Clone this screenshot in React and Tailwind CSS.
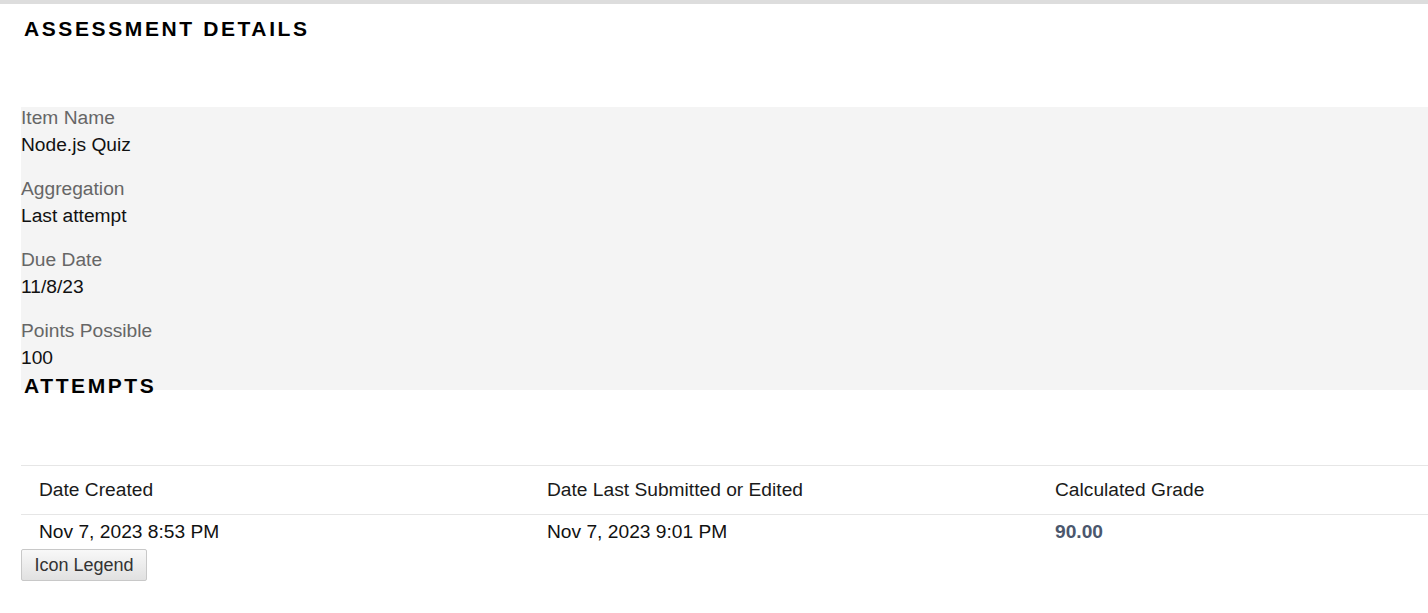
export default function App() {
  const pairs = [
    ["Item Name", "Node.js Quiz"],
    ["Aggregation", "Last attempt"],
    ["Due Date", "11/8/23"],
    ["Points Possible", "100"],
  ];
  return (
    <div className="min-h-[613px] bg-white font-['Liberation_Sans',Arial,sans-serif] text-black">
      <div className="h-[4px] bg-[#dddddd]" />
      <div className="pl-[21px]">
        <h2 className="mt-[13px] pl-[3px] text-[21px] font-bold leading-[24px] tracking-[2.6px] text-black">
          ASSESSMENT DETAILS
        </h2>
        <div className="mt-[66px] bg-[#f4f4f4] pb-[20px]">
          {pairs.map(([label, value], i) => (
            <div key={label} className={i < pairs.length - 1 ? "mb-[21px]" : ""}>
              <div className="text-[19.2px] leading-[21px] text-[#666666]">{label}</div>
              <div className="mt-[4px] text-[19.2px] leading-[25px] text-[#111111]">{value}</div>
            </div>
          ))}
        </div>
        <h2 className="-mt-[16px] pl-[3px] text-[21px] font-bold leading-[24px] tracking-[2.6px] text-black">
          ATTEMPTS
        </h2>
        <div className="mt-[67px] border-t border-[#e6e6e6]">
          <div className="grid grid-cols-[508px_508px_1fr] border-b border-[#e6e6e6] text-[19.2px] leading-[22px] text-[#1a1a1a]">
            <div className="pl-[18px] pt-[13px] pb-[13px]">Date Created</div>
            <div className="pl-[18px] pt-[13px] pb-[13px]">Date Last Submitted or Edited</div>
            <div className="pl-[18px] pt-[13px] pb-[13px]">Calculated Grade</div>
          </div>
          <div className="grid grid-cols-[508px_508px_1fr] text-[19.2px] leading-[22px] text-[#111111]">
            <div className="pl-[18px] pt-[6px] pb-[6px]">Nov 7, 2023 8:53 PM</div>
            <div className="pl-[18px] pt-[6px] pb-[6px]">Nov 7, 2023 9:01 PM</div>
            <div className="pl-[18px] pt-[6px] pb-[6px] font-bold text-[#4b576d]">90.00</div>
          </div>
        </div>
        <button className="h-[32px] rounded-[2px] border border-[#c8c8c8] bg-gradient-to-b from-[#f8f8f8] to-[#e1e1e1] px-[12.5px] text-[18px] leading-[20px] text-[#333333]">
          Icon Legend
        </button>
      </div>
    </div>
  );
}
